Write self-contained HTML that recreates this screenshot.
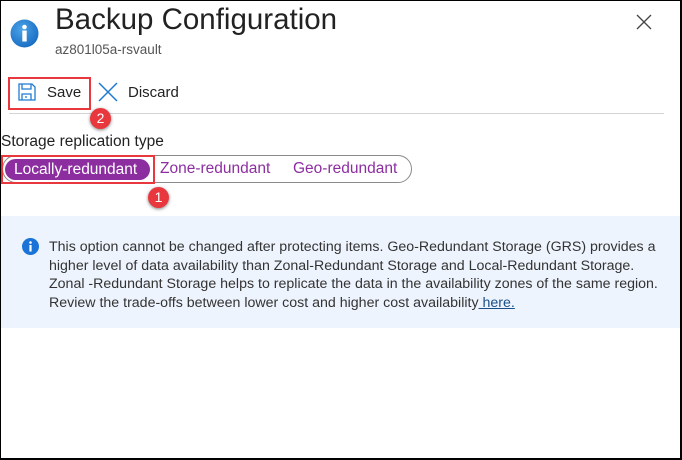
<!DOCTYPE html>
<html><head><meta charset="utf-8"><style>
*{margin:0;padding:0;box-sizing:border-box}
body{width:682px;height:460px;background:#fff;position:relative;overflow:hidden;font-family:"Segoe UI","Liberation Sans",sans-serif;color:#323130}
.frame{position:absolute;left:0;top:0;width:682px;height:460px;border:1px solid #000;border-right:2px solid #000;border-bottom:2px solid #000;z-index:5;pointer-events:none}
.abs{position:absolute;white-space:nowrap}
.badge{position:absolute;width:21px;height:21px;border-radius:50%;background:#e8383d;color:#fff;font-size:14px;text-align:center;line-height:21px;box-shadow:0 1px 3px rgba(0,0,0,.5)}
</style></head><body>
<div class="frame"></div>
<svg class="abs" style="left:10px;top:19px" width="29" height="29" viewBox="0 0 29 29"><defs><radialGradient id="g" cx="40%" cy="35%" r="65%"><stop offset="0" stop-color="#4ba3e8"/><stop offset="1" stop-color="#1a6fc4"/></radialGradient></defs><circle cx="14.5" cy="14.5" r="14" fill="url(#g)"/><circle cx="14.5" cy="8" r="2.3" fill="#fff"/><rect x="12.3" y="11.5" width="4.4" height="11" fill="#fff"/></svg>
<div class="abs" style="left:55px;top:3px;font-size:29.5px;color:#222">Backup Configuration</div>
<div class="abs" style="left:55px;top:42px;font-size:13.5px;color:#555">az801l05a-rsvault</div>
<svg class="abs" style="left:636px;top:14px" width="16" height="16" viewBox="0 0 16 16"><path d="M1 1L15 15M15 1L1 15" stroke="#444" stroke-width="1.3"/></svg>
<svg class="abs" style="left:18px;top:83px" width="18" height="18" viewBox="0 0 18 18" fill="none" stroke="#1f7bd2" stroke-width="1.3"><path d="M1 1H14L17 4V17H1Z"/><path d="M4 1V6H13V1"/><path d="M4 17V11H13V17"/><path d="M8 13V15"/></svg>
<div class="abs" style="left:47px;top:84px;font-size:15px;color:#222">Save</div>
<svg class="abs" style="left:98px;top:82px" width="20" height="20" viewBox="0 0 20 20"><path d="M1 1L19 19M19 1L1 19" stroke="#1f7bd2" stroke-width="1.5"/></svg>
<div class="abs" style="left:128px;top:84px;font-size:15px;color:#222">Discard</div>
<div class="abs" style="left:8px;top:77px;width:83px;height:33px;border:2px solid #e8383d"></div>
<div class="abs" style="left:9px;top:113px;width:655px;height:1px;background:#d4d4d4"></div>
<div class="badge" style="left:90px;top:108px">2</div>
<div class="abs" style="left:1px;top:133px;font-size:15.5px;color:#222">Storage replication type</div>
<div class="abs" style="left:2px;top:155px;width:410px;height:28px;border:1px solid #8a8a8a;border-radius:14px"></div>
<div class="abs" style="left:5px;top:159px;width:145px;height:21px;background:#8c2ea0;border-radius:11px;color:#fff;font-size:15.5px;line-height:21px;padding-left:9px">Locally-redundant</div>
<div class="abs" style="left:160px;top:160px;font-size:15.5px;color:#8c2ea0">Zone-redundant</div>
<div class="abs" style="left:293px;top:160px;font-size:15.5px;color:#8c2ea0">Geo-redundant</div>
<div class="abs" style="left:1px;top:155px;width:154px;height:29px;border:2px solid #e8383d"></div>
<div class="badge" style="left:148px;top:187px">1</div>
<div class="abs" style="left:1px;top:216px;width:680px;height:112px;background:#eef4fd"></div>
<svg class="abs" style="left:22px;top:238px" width="17" height="17" viewBox="0 0 17 17"><circle cx="8.5" cy="8.5" r="8.5" fill="#1a73d6"/><circle cx="8.5" cy="4.5" r="1.3" fill="#fff"/><rect x="7.4" y="7" width="2.2" height="6.5" fill="#fff"/></svg>
<div class="abs" style="left:49px;top:238px;font-size:14.2px;line-height:18.5px;color:#333;white-space:nowrap">This option cannot be changed after protecting items. Geo-Redundant Storage (GRS) provides a<br>higher level of data availability than Zonal-Redundant Storage and Local-Redundant Storage.<br>Zonal -Redundant Storage helps to replicate the data in the availability zones of the same region.<br>Review the trade-offs between lower cost and higher cost availability<span style="color:#1a4f8a;text-decoration:underline"> here.</span></div>
</body></html>
